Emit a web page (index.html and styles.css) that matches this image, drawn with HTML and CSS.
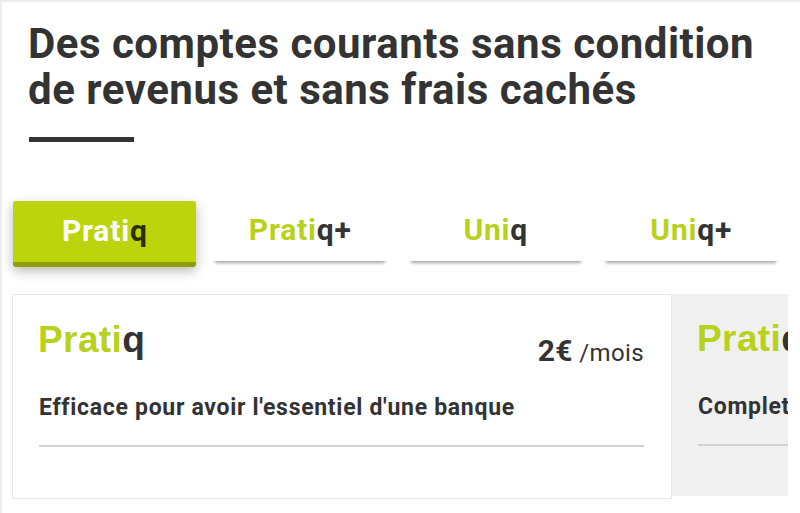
FILE: index.html
```html
<!DOCTYPE html>
<html lang="fr">

<head>
    <meta charset="UTF-8">
    <title>Comptes courants</title>
    <link rel="stylesheet" href="styles.css">
</head>

<body>
    <div class="page">
        <div class="intro">
            <h1 class="intro-title">Des comptes courants sans condition de revenus et sans frais cachés</h1>
            <div class="intro-bar"></div>
        </div>

        <div class="tabs">
            <div class="tab-slot"><button class="tab tab-active"><span class="brand">Prati</span><span class="dark">q</span></button></div>
            <div class="tab-slot"><button class="tab"><span class="brand">Prati</span><span class="dark">q+</span></button></div>
            <div class="tab-slot"><button class="tab"><span class="brand">Uni</span><span class="dark">q</span></button></div>
            <div class="tab-slot"><button class="tab"><span class="brand">Uni</span><span class="dark">q+</span></button></div>
        </div>

        <div class="offers">
            <div class="offer">
                <div class="offer-head">
                    <div class="offer-name"><span class="brand">Prati</span><span class="dark">q</span></div>
                    <div class="offer-price"><strong>2€</strong> <span>/mois</span></div>
                </div>
                <p class="offer-desc">Efficace pour avoir l'essentiel d'une banque</p>
                <div class="offer-rule"></div>
            </div>
            <div class="offer offer-next">
                <div class="offer-head">
                    <div class="offer-name"><span class="brand">Prati</span><span class="dark">q+</span></div>
                    <div class="offer-price"><strong>7€</strong> <span>/mois</span></div>
                </div>
                <p class="offer-desc">Complet pour profiter de tous les services</p>
                <div class="offer-rule"></div>
            </div>
        </div>
    </div>
</body>

</html>
```

FILE: styles.css
```css
* {
    box-sizing: border-box;
}

body {
    margin: 0;
    font-family: Roboto, "Liberation Sans", Arial, sans-serif;
    color: #333;
    background-color: #fff;
}

.page {
    height: 513px;
    overflow: hidden;
    border-top: 2px solid #eeeeee;
    border-left: 2px solid #eeeeee;
}

.brand {
    color: #b8d11b;
}

.dark {
    color: #333;
}

/* heading */
.intro {
    padding: 0 26px;
}

.intro-title {
    margin: 19px 0 0;
    font-size: 42px;
    line-height: 46px;
    font-weight: 700;
    letter-spacing: 0.5px;
    color: #333;
}

.intro-bar {
    width: 105px;
    height: 5px;
    margin-top: 24px;
    margin-left: 1px;
    background-color: #333;
}

/* tabs */
.tabs {
    display: grid;
    grid-template-columns: repeat(4, 195.5px);
    margin-top: 59px;
    padding-left: 5px;
}

.tab-slot {
    display: flex;
    justify-content: center;
    align-items: flex-start;
    height: 66px;
}

.tab {
    width: 176px;
    height: 60px;
    padding: 0 0 2px;
    border: none;
    border-radius: 3px;
    background-color: #fff;
    font-family: Roboto, sans-serif;
    font-size: 30px;
    font-weight: 700;
    line-height: 1;
    letter-spacing: 0.8px;
    box-shadow: 0 5px 3px -3px rgba(0, 0, 0, 0.35);
    cursor: pointer;
}

.tab-active {
    width: 183px;
    height: 66px;
    padding: 0 0 2px;
    background-color: #bcd40c;
    border-bottom: 5px solid #8c9f06;
    box-shadow: 0 4px 12px rgba(0, 0, 0, 0.28);
}

.tab-active .brand {
    color: #fff;
}

.tab-active .dark {
    color: #2a3000;
}

/* offers */
.offers {
    display: flex;
    align-items: flex-start;
    width: 776px;
    margin-top: 27px;
    margin-left: 10px;
    overflow: hidden;
}

.offer {
    flex: 0 0 660px;
    height: 205px;
    padding: 26px 27px 0 25px;
    border: 1px solid #e6e6e6;
    background-color: #fff;
}

.offer-next {
    height: 202px;
    border: none;
    padding-left: 25px;
    background-color: #f0f0f0;
}

.offer-head {
    display: flex;
    justify-content: space-between;
    align-items: flex-start;
    height: 43px;
}

.offer-name {
    font-family: "Liberation Sans", Arial, sans-serif;
    font-size: 37px;
    font-weight: 700;
    line-height: 38px;
    letter-spacing: 0.4px;
}

.offer-price {
    margin-top: 15px;
    font-size: 24px;
    line-height: 29px;
    letter-spacing: 0.4px;
}

.offer-price strong {
    font-size: 30px;
    letter-spacing: 0.3px;
}

.offer-desc {
    margin: 31px 0 0 1px;
    font-size: 23px;
    font-weight: 700;
    line-height: 26px;
    letter-spacing: 0.7px;
    white-space: nowrap;
}

.offer-rule {
    height: 2px;
    margin-top: 24px;
    margin-left: 1px;
    background-color: #d2d2d2;
}
```
